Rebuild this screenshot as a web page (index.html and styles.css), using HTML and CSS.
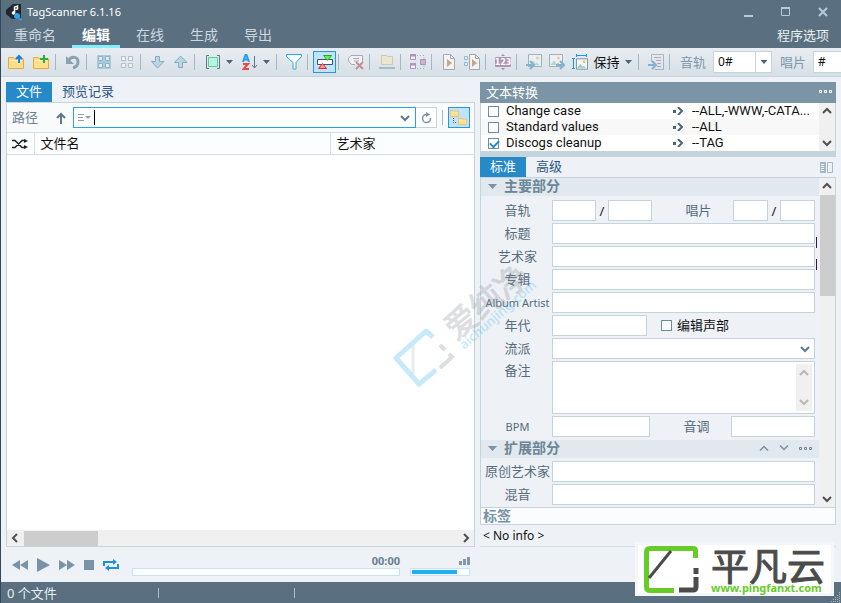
FILE: index.html
```html
<!DOCTYPE html>
<html lang="zh-CN">
<head>
<meta charset="utf-8">
<title>TagScanner 6.1.16</title>
<link rel="stylesheet" href="styles.css">
</head>
<body>
<svg class="defs" aria-hidden="true">
  <symbol id="caret" viewBox="0 0 7 4"><path d="M0 0H7L3.500 4Z" fill="#4b6578"/></symbol>
  <symbol id="chev-down" viewBox="0 0 10 10"><path d="M1 3L5 7L9 3" fill="none" stroke="currentColor" stroke-width="2"/></symbol>
  <symbol id="chev-up" viewBox="0 0 10 10"><path d="M1 7L5 3L9 7" fill="none" stroke="currentColor" stroke-width="2"/></symbol>
  <symbol id="dots" viewBox="0 0 13 3"><path d="M.5 .5h2v2h-2zM5.500 .5h2v2h-2zM10.500 .5h2v2h-2z" fill="none" stroke="currentColor"/></symbol>
  <symbol id="maps" viewBox="0 0 11 8"><path d="M0 3h3v3H0z" fill="#4b6578"/><path d="M5 0L9 4L5 8" fill="none" stroke="#4b6578" stroke-width="2"/></symbol>
  <symbol id="folder" viewBox="0 0 16 12"><path d="M.5 11.500V.5h5l1 1.500h9v9.500z" fill="#ffe08a" stroke="#e8a83c"/><path d="M2 3.500h12" stroke="#fff3c8"/></symbol>
  <symbol id="picture" viewBox="0 0 14 13"><path d="M.5 .5h13v12H.5z" fill="#f4f7f9" stroke="#6d8594"/><circle cx="9.500" cy="4" r="1.500" fill="#f0b850"/><path d="M2 11l3-4 3 4M7 11l2-2 2 2" fill="#8fd0b0" stroke="#8fd0b0"/></symbol>
</svg>

<header class="header">
  <div class="titlebar">
    <svg class="app-icon" width="16" height="18" viewBox="0 0 16 18"><path d="M0 7L7 1h8v15H6L0 11z" fill="#20262d"/><path d="M8.500 10V4l3-1v3l-2 .5" fill="none" stroke="#fff" stroke-width="1.500"/><circle cx="7.500" cy="10" r="1.800" fill="#fff"/><circle cx="11" cy="13" r="3" fill="#2ea3ee"/><path d="M13 15l2.500 2.500" stroke="#2ea3ee" stroke-width="2"/></svg>
    <h1 class="app-title">TagScanner 6.1.16</h1>
    <div class="window-buttons">
      <button aria-label="最小化"><svg width="10" height="10"><path d="M0 9h9" stroke="#b4cbda" stroke-width="2"/></svg></button>
      <button aria-label="最大化"><svg width="10" height="10"><path d="M.5 1h8v7.500h-8z" fill="none" stroke="#b4cbda"/><path d="M0 1h9" stroke="#b4cbda" stroke-width="2"/></svg></button>
      <button aria-label="关闭"><svg width="10" height="10"><path d="M1 1l8 8M9 1l-8 8" stroke="#b4cbda" stroke-width="2"/></svg></button>
    </div>
  </div>
  <nav class="menu">
    <a href="#rename">重命名</a>
    <a href="#edit" class="active">编辑</a>
    <a href="#online">在线</a>
    <a href="#generate">生成</a>
    <a href="#export">导出</a>
    <a href="#options" class="options">程序选项</a>
  </nav>
</header>

<div class="toolbar">
  <button class="tool wide" aria-label="打开文件夹"><svg width="16" height="16"><use href="#folder" y="3" width="16" height="12"/><path d="M11 9V2M8 5l3-3 3 3" fill="none" stroke="#1482e8" stroke-width="2"/></svg></button>
  <button class="tool wide" aria-label="添加文件夹"><svg width="16" height="16"><use href="#folder" y="3" width="16" height="12"/><path d="M11 1v8M7 5h8" stroke="#2fae36" stroke-width="2"/></svg></button>
  <span class="sep"></span>
  <button class="tool" aria-label="撤消"><svg width="16" height="16"><path d="M3 7C6 2 13 2 13 8C13 11 11 13 8 14" fill="none" stroke="#8ba1af" stroke-width="3"/><path d="M1 2v8h8z" fill="#8ba1af"/></svg></button>
  <span class="sep"></span>
  <button class="tool" aria-label="全选"><svg width="16" height="16"><path d="M1 1h14v14H1z" fill="#a9cbdc"/><path d="M2.500 2.500h4v4h-4zM9.500 2.500h4v4h-4zM2.500 9.500h4v4h-4zM9.500 9.500h4v4h-4z" fill="#dfebf1" stroke="#8fb2c4"/></svg></button>
  <button class="tool" aria-label="取消选择"><svg width="16" height="16"><path d="M2.500 2.500h4v4h-4zM9.500 2.500h4v4h-4zM2.500 9.500h4v4h-4zM9.500 9.500h4v4h-4z" fill="#eef2f5" stroke="#b3bec5"/></svg></button>
  <span class="sep"></span>
  <button class="tool" aria-label="下移"><svg width="16" height="16"><path d="M5.500 2.500h4v5h4.500L7.500 14 1.500 7.500h4z" fill="#b9d6e4" stroke="#8aaabc"/></svg></button>
  <button class="tool" aria-label="上移"><svg width="16" height="16"><path d="M5.500 13.500h4v-5h4.500L7.500 2 1.500 8.500h4z" fill="#b9d6e4" stroke="#8aaabc"/></svg></button>
  <span class="sep"></span>
  <button class="tool drop" aria-label="视图"><svg width="16" height="16"><path d="M4 1.500H1.500v13H4M12 1.500h2.500v13H12" fill="none" stroke="#5d7889"/><path d="M3.500 3.500h9v9h-9z" fill="#b8f4de" stroke="#5ecb9c"/></svg><svg width="7" height="4"><use href="#caret"/></svg></button>
  <button class="tool drop" aria-label="排序"><svg width="16" height="16"><path d="M1 8L3.500 1h1L7 8M2 5.500h4" fill="none" stroke="#24a0e8" stroke-width="2"/><path d="M1 10h5L1.500 15H7" fill="none" stroke="#ec4848" stroke-width="2"/><path d="M12.500 2v12M10 11l2.500 3 2.500-3" fill="none" stroke="#5d7889"/></svg><svg width="7" height="4"><use href="#caret"/></svg></button>
  <span class="sep"></span>
  <button class="tool" aria-label="筛选"><svg width="16" height="16"><path d="M.5 .5h15v2L10 8.500V15H7V8.500L.5 2.500z" fill="#fff" stroke="#26abe8"/></svg></button>
  <span class="sep"></span>
  <button class="tool pressed" aria-label="标签比较"><svg width="16" height="16"><path d="M.5 5.500h15v5h-15z" fill="#fff" stroke="#3f5666"/><path d="M6.500 1.500h8L10.500 6.500z" fill="#6cf04a" stroke="#28a828"/><path d="M1.500 14.500h8L5.500 9.500z" fill="#ff9a8a" stroke="#e02828"/></svg></button>
  <span class="sep"></span>
  <button class="tool" aria-label="清除标签"><svg width="16" height="16"><path d="M7 10.500H3.500L.5 7V4.500l2.500-3h11.500V8" fill="#eef2f5" stroke="#a0adb5"/><path d="M5 4.500h6M6 7h5" stroke="#b79dbb"/><path d="M8 8l7 7M15 8l-7 7" stroke="#c78e92" stroke-width="2"/></svg></button>
  <span class="sep"></span>
  <button class="tool" aria-label="标签存储"><svg width="16" height="16"><path d="M2.500 10.500v-9h5l1 1h5v8z" fill="#ebe5d2" stroke="#d3c8a8"/><path d="M0 14h16" stroke="#95bfd2" stroke-width="2"/></svg></button>
  <span class="sep"></span>
  <button class="tool" aria-label="字段映射"><svg width="16" height="16"><path d="M.5 .5h5v5h-5zM.5 9.500h5v5h-5z" fill="#eef0f4" stroke="#b092b6"/><path d="M0 1.500h6M0 10.500h6" stroke="#b092b6" stroke-width="2"/><path d="M10.500 5.500h5v5h-5z" fill="#c9b4ce" stroke="#b092b6"/><path d="M7 1.500h7v3M7 14.500h7v-3" fill="none" stroke="#9eabb3" stroke-dasharray="1 2"/></svg></button>
  <span class="sep"></span>
  <button class="tool" aria-label="播放文件"><svg width="16" height="16"><path d="M2.500 .5h7l4 4v11h-11z" fill="#f1f3f5" stroke="#a0aab0"/><path d="M9.500 .5v4h4" fill="none" stroke="#a0aab0"/><path d="M6 5l5 4-5 4z" fill="#cfa482"/></svg></button>
  <button class="tool" aria-label="播放列表"><svg width="16" height="16"><path d="M5.500 .5h6l4 4v11h-10z" fill="#f1f3f5" stroke="#a0aab0"/><path d="M11.500 .5v4h4" fill="none" stroke="#a0aab0"/><path d="M8 5l5 4-5 4z" fill="#cfa482"/><path d="M.5 2.500h3v3h-3zM.5 8.500h3v3h-3z" fill="#e4f1f7" stroke="#8fb9cc"/></svg></button>
  <span class="sep"></span>
  <button class="tool" aria-label="编号"><svg width="16" height="16"><rect y="3" width="16" height="10" rx="1" fill="#b092b6"/><path d="M8 0l2 2H6zM8 16l2-2H6z" fill="#8d9aa3"/><text x="8" y="11" class="digits">123</text></svg></button>
  <span class="sep"></span>
  <button class="tool faded" aria-label="导入封面"><svg width="16" height="16"><use href="#picture" x="2" width="14" height="13"/><path d="M0 11h7M4 7l4 4-4 4" fill="none" stroke="#3a87bd" stroke-width="2"/></svg></button>
  <button class="tool faded" aria-label="导出封面"><svg width="16" height="16"><use href="#picture" width="14" height="13"/><path d="M7 11h7M11 7l4 4-4 4" fill="none" stroke="#3a87bd" stroke-width="2"/></svg></button>
  <button class="tool keep"><svg width="16" height="16"><use href="#picture" x="4" y="4" width="12" height="12"/><path d="M4 1.500h11M4.500 0v3M14.500 0v3M1.500 4v11M0 4.500h3M0 14.500h3" stroke="#2196ee"/></svg><span>保持</span><svg width="7" height="4"><use href="#caret"/></svg></button>
  <span class="sep"></span>
  <button class="tool faded" aria-label="歌词"><svg width="16" height="16"><path d="M3.500 .5h12v15h-9M3.500 .5v7" fill="none" stroke="#7d8e9a"/><path d="M6 3.500h7M8 6.500h5M9 9.500h4M9 12.500h4" stroke="#9a6ca2"/><path d="M0 11h6M4 7l4 4-4 4" fill="none" stroke="#3a87bd" stroke-width="2"/></svg></button>
  <span class="sep"></span>
  <label class="tool-label" for="track-format">音轨</label>
  <div class="combo"><select id="track-format"><option>0#</option></select><svg width="8" height="4"><use href="#caret"/></svg></div>
  <label class="tool-label" for="disc-format">唱片</label>
  <div class="combo"><select id="disc-format"><option>#</option></select></div>
</div>

<main class="workspace">
  <section class="files">
    <nav class="tabs">
      <a href="#files" class="active">文件</a>
      <a href="#preview">预览记录</a>
    </nav>
    <div class="file-panel">
      <div class="path-row">
        <label for="path">路径</label>
        <button class="up" aria-label="上一级"><svg width="10" height="12"><path d="M5 12V2M1 6l4-4 4 4" fill="none" stroke="#5d7889" stroke-width="2"/></svg></button>
        <div class="path-box">
          <svg width="13" height="9"><path d="M0 1.500h6M0 4.500h5M0 7.500h6" stroke="#8ba1af"/><path d="M7 3h6l-3 3z" fill="#8ba1af"/></svg>
          <span class="text-cursor"></span>
          <input id="path" type="text">
          <svg class="chevron" width="10" height="10"><use href="#chev-down"/></svg>
        </div>
        <button class="refresh" aria-label="刷新"><svg width="11" height="12"><path d="M7 2.500H5A4 4 0 1 0 9.500 6" fill="none" stroke="#7b919f" stroke-width="1.500"/><path d="M5 0l4 2.500L5 5z" fill="#7b919f"/></svg></button>
        <span class="path-sep"></span>
        <button class="tree" aria-label="文件夹树"><svg width="18" height="16"><use href="#folder" width="9" height="7"/><use href="#folder" x="8" y="8" width="9" height="7"/><path d="M3.500 8v4.500H7" fill="none" stroke="#3f5666" stroke-dasharray="1 1"/></svg></button>
      </div>
      <table class="file-table">
        <thead><tr>
          <th class="col-mark"><svg width="16" height="10"><path d="M0 1.500h3l7 7h4M0 8.500h3l7-7h4" fill="none" stroke="#222" stroke-width="1.500"/><path d="M12 0l4 2-4 2zM12 6l4 2-4 2z" fill="#222"/></svg></th>
          <th class="col-name">文件名</th>
          <th>艺术家</th>
        </tr></thead>
      </table>
      <div class="file-area"></div>
      <div class="hscroll">
        <svg width="10" height="10"><path d="M7 1L3 5l4 4" fill="none" stroke="#505050" stroke-width="2"/></svg>
        <div class="hthumb"></div>
        <svg width="10" height="10"><path d="M3 1l4 4-4 4" fill="none" stroke="#505050" stroke-width="2"/></svg>
      </div>
    </div>
    <div class="player">
      <div class="transport">
        <button aria-label="后退"><svg width="16" height="10"><path d="M8 0v10L0 5zM16 0v10L8 5z"/></svg></button>
        <button aria-label="播放"><svg width="13" height="14"><path d="M0 0l13 7-13 7z"/></svg></button>
        <button aria-label="前进"><svg width="16" height="10"><path d="M0 0v10l8-5zM8 0v10l8-5z"/></svg></button>
        <button aria-label="停止"><svg width="10" height="10"><path d="M0 0h10v10H0z"/></svg></button>
        <button aria-label="循环"><svg class="blue" width="16" height="12"><path d="M1 7V3h10M15 5v4H5" fill="none" stroke="#1e90dc" stroke-width="2"/><path d="M10 0l4 3-4 3zM6 6L2 9l4 3z"/></svg></button>
      </div>
      <div class="seek"><time>00:00</time><div class="bar"></div></div>
      <div class="volume"><svg width="11" height="8"><path d="M0 4h3v4H0zM4 2h3v6H4zM8 0h3v8H8z" fill="#8199aa"/></svg><div class="bar"><div class="level"></div></div></div>
    </div>
  </section>

  <aside class="details">
    <h2 class="panel-title">文本转换 <svg width="13" height="3"><use href="#dots"/></svg></h2>
    <div class="scripts">
      <ul>
        <li><label><input type="checkbox"><span>Change case</span></label><svg width="11" height="8"><use href="#maps"/></svg><span>--ALL,-WWW,-CATA...</span></li>
        <li><label><input type="checkbox"><span>Standard values</span></label><svg width="11" height="8"><use href="#maps"/></svg><span>--ALL</span></li>
        <li><label><input type="checkbox" checked><span>Discogs cleanup</span></label><svg width="11" height="8"><use href="#maps"/></svg><span>--TAG</span></li>
      </ul>
      <div class="vscroll"><svg width="10" height="10"><use href="#chev-up"/></svg><svg width="10" height="10"><use href="#chev-down"/></svg></div>
    </div>
    <nav class="tabs">
      <a href="#standard" class="active">标准</a>
      <a href="#advanced">高级</a>
      <svg class="layout-icon" width="13" height="11"><path d="M0 0h6v11H0z" fill="#a3bac5"/><path d="M1 2.500h3M1 4.500h3M1 6.500h3M1 8.500h3" stroke="#eef1f6"/><path d="M7.500 .5h5v10h-5z" fill="none" stroke="#a3bac5"/></svg>
    </nav>
    <div class="form-panel">
      <form class="form">
        <h3 class="section"><svg width="9" height="5"><path d="M0 0h9L4.500 5z"/></svg>主要部分</h3>
        <div class="fields">
          <label for="track">音轨</label>
          <div class="line"><input id="track" class="w44"><span class="slash">/</span><input class="w44" aria-label="音轨总数"><label class="inner" for="disc">唱片</label><input id="disc" class="w35"><span class="slash">/</span><input class="w35" aria-label="唱片总数"></div>
          <label for="title">标题</label><input id="title">
          <label for="artist">艺术家</label><input id="artist">
          <label for="album">专辑</label><input id="album">
          <label class="latin" for="album-artist">Album Artist</label><input id="album-artist">
          <label for="year">年代</label>
          <div class="line"><input id="year" class="w95"><label class="check"><input type="checkbox"><span>编辑声部</span></label></div>
          <label for="genre">流派</label>
          <div class="genre"><select id="genre"><option></option></select><svg width="10" height="10"><use href="#chev-down"/></svg></div>
          <label class="top" for="comment">备注</label>
          <div class="comment"><textarea id="comment"></textarea><div class="note-scroll"><svg width="10" height="10"><use href="#chev-up"/></svg><svg width="10" height="10"><use href="#chev-down"/></svg></div></div>
          <label class="latin" for="bpm">BPM</label>
          <div class="line"><input id="bpm" class="w98"><label class="inner" for="key">音调</label><input id="key" class="w84"></div>
        </div>
        <h3 class="section"><svg width="9" height="5"><path d="M0 0h9L4.500 5z"/></svg>扩展部分
          <span class="section-tools"><svg width="10" height="6"><path d="M1 5.500l4-4 4 4" class="thin"/></svg><svg width="10" height="6"><path d="M1 .5l4 4 4-4" class="thin"/></svg><svg width="13" height="3"><use href="#dots"/></svg></span>
        </h3>
        <div class="fields extended">
          <label for="orig">原创艺术家</label><input id="orig">
          <label for="mix">混音</label><input id="mix">
        </div>
      </form>
      <span class="marks"></span>
      <div class="vscroll"><svg width="10" height="10"><use href="#chev-up"/></svg><div class="vthumb"></div><svg width="10" height="10"><use href="#chev-down"/></svg></div>
    </div>
    <h3 class="tag-title">标签</h3>
    <p class="info">&lt; No info &gt;</p>
  </aside>
</main>

<footer class="status"><span>0 个文件</span><span></span><span></span>
  <svg class="grip" width="11" height="11"><path d="M9.500 0v11M7.500 3v8M5.500 5v6M3.500 7v4M1.500 9v2" stroke="#a9bcc8" stroke-dasharray="1 1"/></svg>
</footer>

<svg class="watermark" width="160" height="140" viewBox="0 0 160 140" aria-hidden="true">
  <path d="M43 28L36 22L6 49L29 75L46 61" fill="none" stroke="#49bdf3" stroke-width="5" stroke-linejoin="round"/>
  <path d="M23 35v30" stroke="#8f959b" stroke-width="3" opacity=".6"/>
  <path d="M50 36l5 5M59 45l3 3-12 11" fill="none" stroke="#8f959b" stroke-width="4"/>
  <text class="mark-name" transform="translate(66 32) rotate(-39)">爱纯净</text>
  <text class="mark-site" transform="translate(74 41) rotate(-41)">aichunjing.com</text>
</svg>

<div class="brand">
  <svg width="56" height="48" viewBox="0 0 56 48"><path d="M51.500 12V4.500Q51.500 2.500 49 2.500H6Q2.500 2.500 2.500 6V41Q2.500 44.500 6 44.500H30" fill="none" stroke="#66cc28" stroke-width="5"/><path d="M5 32L27 5" stroke="#4b4b4b" stroke-width="3"/><path d="M52 22v6M52 31v10q0 3-3 3H35" fill="none" stroke="#4b4b4b" stroke-width="5"/></svg>
  <div class="brand-text"><strong>平凡云</strong><span>www.pingfanxt.com</span></div>
</div>
</body>
</html>
```
FILE: styles.css
```css
* { box-sizing: border-box; }

body {
  margin: 0;
  min-height: 100vh;
  display: flex;
  flex-direction: column;
  position: relative;
  overflow: hidden;
  border-left: 1px solid #35485a;
  background: #eef1f6;
  color: #111;
  font: 13px/16px "Noto Sans", "Noto Sans CJK SC", sans-serif;
}

h1, h2, h3, p, ul { margin: 0; padding: 0; font-size: 13px; font-weight: 400; }
ul { list-style: none; }
a { color: inherit; text-decoration: none; }
svg { display: block; flex: none; }
button { display: flex; align-items: center; justify-content: center; padding: 0; border: 0; background: none; font: inherit; color: inherit; }
input, select, textarea { min-width: 0; margin: 0; padding: 0 4px; border: 1px solid #c3d4dc; border-radius: 0; background: #fff; font: inherit; outline: 0; }
select { appearance: none; }
.defs { position: absolute; width: 0; height: 0; }

input[type="checkbox"] { appearance: none; width: 11px; height: 11px; padding: 0; border: 1px solid #6f8b9c; flex: none; }
input[type="checkbox"]:checked::before { content: ""; display: block; width: 7px; height: 4px; margin: 1px; border: solid #268ac8; border-width: 0 0 2px 2px; transform: rotate(-45deg); }

/* Title and menu */
.header { background: #5a7080; color: #fff; }
.titlebar { display: flex; align-items: center; height: 24px; padding: 0 12px 0 5px; }
.app-icon { margin-right: 5px; }
.app-title { flex: 1; font-size: 11px; }
.window-buttons { display: flex; gap: 27px; padding-right: 1px; }
.menu { display: flex; gap: 6px; height: 24px; padding-left: 3px; font-size: 14px; color: #ccd8e0; }
.menu a { padding: 2px 10px 0; line-height: 18px; border-bottom: 3px solid transparent; }
.menu .active { color: #fff; font-weight: 700; border-color: #87edf8; }
.menu .options { margin-left: auto; padding-right: 12px; font-size: 13px; color: #e8eff3; }

/* Toolbar */
.toolbar { display: flex; align-items: center; height: 29px; padding-left: 2px; overflow: hidden; border-bottom: 1px solid #c3d4dc; background: linear-gradient(#e9edf2, #d6e0e6); }
.tool { flex: none; width: 23px; height: 22px; }
.tool.wide { width: 25px; }
.tool.drop { width: 37px; gap: 5px; }
.tool.keep { width: 68px; gap: 5px; }
.tool.pressed { border: 1px solid #2b95dc; background: #bfe3fb; }
.tool.faded svg { opacity: .55; }
.digits { font: 700 8px "DejaVu Sans", sans-serif; fill: #fff; text-anchor: middle; }
.sep { flex: none; width: 1px; height: 16px; margin: 0 5px 0 2px; background: #a3b8c5; }
.tool-label { flex: none; margin: 0 7px 0 5px; color: #7e98a9; }
.combo { flex: none; display: flex; align-items: center; width: 59px; height: 22px; margin-right: 3px; border: 1px solid #c3d4dc; background: #fff; }
.combo select { width: 42px; height: 20px; margin-right: 4px; border: 0; border-right: 1px solid #c3d4dc; font-size: 12px; color: #111; }

/* Two panes */
.workspace { flex: 1; display: grid; grid-template-columns: minmax(0, 1fr) 356px; gap: 5px; padding: 5px 5px 0; }
.files, .details { display: flex; flex-direction: column; min-width: 0; }
.tabs { display: flex; align-items: center; height: 20px; color: #2b5580; }
.tabs a { padding: 0 10px; line-height: 18px; height: 20px; }
.tabs .active { background: #268ac8; color: #fff; }
.layout-icon { margin: 0 3px 0 auto; }

.file-panel { flex: 1; display: flex; flex-direction: column; border: 1px solid #c3d4dc; background: #fff; }
.path-row { display: flex; align-items: center; height: 29px; padding: 0 4px 0 5px; background: #f8fafc; color: #6e8291; }
.path-row label { padding-bottom: 2px; }
.up { width: 35px; padding-left: 10px; }
.path-box { flex: 1; display: flex; align-items: center; height: 21px; padding: 0 5px 0 4px; border: 1px solid #26a4e4; background: #fff; color: #5d7889; }
.path-box input { flex: 1; border: 0; }
.text-cursor { width: 1px; height: 15px; margin-left: 3px; background: #000; }
.refresh { width: 21px; height: 21px; border: 1px solid #c3d4dc; border-left: 0; background: #fff; }
.path-sep { width: 1px; height: 15px; margin: 0 5px; background: #a3b8c5; }
.tree { width: 22px; height: 21px; border: 1px solid #2b95dc; background: #bfe3fb; }

.file-table { width: 100%; table-layout: fixed; border-collapse: collapse; background: #fcfdfe; }
.file-table th { height: 22px; padding: 0 6px 2px; border: 1px solid #d3dee5; border-width: 1px 0; font-weight: 400; text-align: left; }
.file-table th + th { border-left-width: 1px; }
.file-table .col-mark { width: 27px; padding: 0 5px; }
.file-table .col-name { width: 296px; }
.file-area { flex: 1; }
.hscroll { display: flex; align-items: center; gap: 4px; height: 16px; padding: 0 3px; background: #f0f0f0; }
.hscroll svg:last-child { margin-left: auto; }
.hthumb { width: 74px; height: 15px; background: #cdcdcd; }

.player { display: flex; height: 35px; padding: 6px 5px 0 6px; }
.transport { display: flex; align-items: center; gap: 9px; height: 24px; padding-right: 13px; fill: #7893a5; }
.blue { fill: #1e90dc; }
.seek { flex: 1; margin-right: 10px; }
.seek time { display: block; height: 15px; font-size: 11px; font-weight: 700; text-align: right; color: #6a8090; }
.volume { width: 60px; }
.volume > svg { margin: 4px 0 3px auto; }
.bar { height: 8px; padding: 1px; border: 1px solid #c0e6fb; background: #fff; }
.level { width: 80%; height: 4px; background: #22aef0; }

/* Right pane */
.panel-title { display: flex; align-items: center; justify-content: space-between; height: 21px; padding: 0 4px 2px 6px; background: #7b95a6; color: #fff; }
.scripts { display: flex; height: 54px; border: 1px solid #c3d4dc; border-width: 0 1px 6px; background: #fff; font: 12px/16px Roboto, sans-serif; }
.scripts ul { flex: 1; }
.scripts li { display: flex; align-items: center; height: 16px; padding-left: 7px; }
.scripts li:nth-child(2) { background: #f8f8f8; }
.scripts li label { display: flex; align-items: center; gap: 7px; width: 185px; }
.scripts li svg { margin-right: 8px; }
.vscroll { display: flex; flex-direction: column; align-items: center; justify-content: space-between; width: 16px; padding: 3px 0; background: #f0f0f0; color: #505050; }
.form-panel { flex: 1; display: flex; position: relative; border: 1px solid #c3d4dc; }
.form { flex: 1; min-width: 0; }
.section { display: flex; align-items: center; gap: 7px; height: 18px; padding: 0 7px 2px; background: #e1e8ee; color: #6d8697; font-size: 14px; font-weight: 700; fill: #7893a5; }
.section-tools { display: flex; align-items: center; gap: 10px; margin-left: auto; }
.thin { fill: none; stroke: #7893a5; stroke-width: 1.5px; }
.fields { display: grid; grid-template-columns: 71px minmax(0, 1fr); gap: 2px 0; padding: 4px 4px 3px 0; align-items: center; color: #576c7b; text-align: center; }
.fields.extended { padding-top: 3px; padding-bottom: 2px; }
.fields input:not([type="checkbox"]) { height: 21px; }
.fields > label { padding: 0 0 2px 2px; white-space: nowrap; }
.fields .latin { padding-bottom: 0; font-size: 11px; }
.fields .top { align-self: start; padding-top: 1px; }
.line { display: flex; align-items: center; }
.slash { width: 12px; color: #222; }
.inner { flex: 1; padding: 0 0 2px 12px; }
.check { display: flex; align-items: center; gap: 5px; margin-left: 14px; color: #111; }
.check span { padding-bottom: 2px; }
.w35 { width: 35px; }
.w44 { width: 44px; }
.w84 { width: 84px; }
.w95 { width: 95px; }
.w98 { width: 98px; }
.genre { display: flex; align-items: center; height: 21px; padding-right: 4px; border: 1px solid #c3d4dc; background: #fff; color: #5d7889; }
.genre select { flex: 1; border: 0; }
.comment { display: flex; height: 53px; padding: 2px; border: 1px solid #c3d4dc; background: #fff; }
.comment textarea { flex: 1; border: 0; resize: none; }
.note-scroll { display: flex; flex-direction: column; align-items: center; justify-content: space-between; width: 16px; padding: 4px 0; background: #f0f0f0; color: #b8b8b8; }
.form-panel .vscroll { justify-content: flex-start; gap: 4px; }
.form-panel .vscroll svg:last-child { margin-top: auto; }
.vthumb { width: 15px; height: 101px; background: #cdcdcd; }
.marks { position: absolute; top: 59px; right: 18px; width: 1px; height: 33px; background: linear-gradient(#3c1450 11px, transparent 11px 22px, #3c1450 22px); }
.tag-title { height: 17px; padding-left: 2px; border: 1px solid #c3d4dc; border-top: 0; background: #fafcfe; color: #7893a5; font-size: 14px; font-weight: 700; line-height: 16px; }
.info { height: 22px; margin-bottom: 35px; padding-left: 3px; border-bottom: 1px solid #d3dee5; font-size: 12px; line-height: 22px; }

.status { display: flex; align-items: center; position: relative; height: 21px; padding-left: 6px; background: #5a7080; color: #e8eff3; }
.status span { width: 136px; height: 10px; line-height: 10px; border-left: 1px solid #a9bcc8; }
.status span:first-child { width: 151px; border: 0; }
.grip { position: absolute; right: 0; bottom: 0; }

/* Marks laid over the window */
.watermark { position: absolute; left: 389px; top: 309px; overflow: visible; opacity: .3; pointer-events: none; }
.mark-name { font: 400 32px "Noto Sans CJK SC", sans-serif; fill: #8f959b; stroke: #8f959b; }
.mark-site { font: 600 13px "Noto Sans", sans-serif; fill: #49bdf3; }
.brand { position: absolute; right: 7px; bottom: 7px; display: flex; gap: 11px; width: 199px; height: 54px; padding: 1px 6px; border: 3px solid #f4f6f9; background: #fff; }
.brand-text { display: flex; flex-direction: column; color: #4b4b4b; white-space: nowrap; }
.brand strong { font: 400 38px/36px "Noto Sans CJK SC", sans-serif; -webkit-text-stroke: 1px #4b4b4b; }
.brand span { font: 700 11px/12px "Noto Sans", sans-serif; color: #66cc28; }
```
